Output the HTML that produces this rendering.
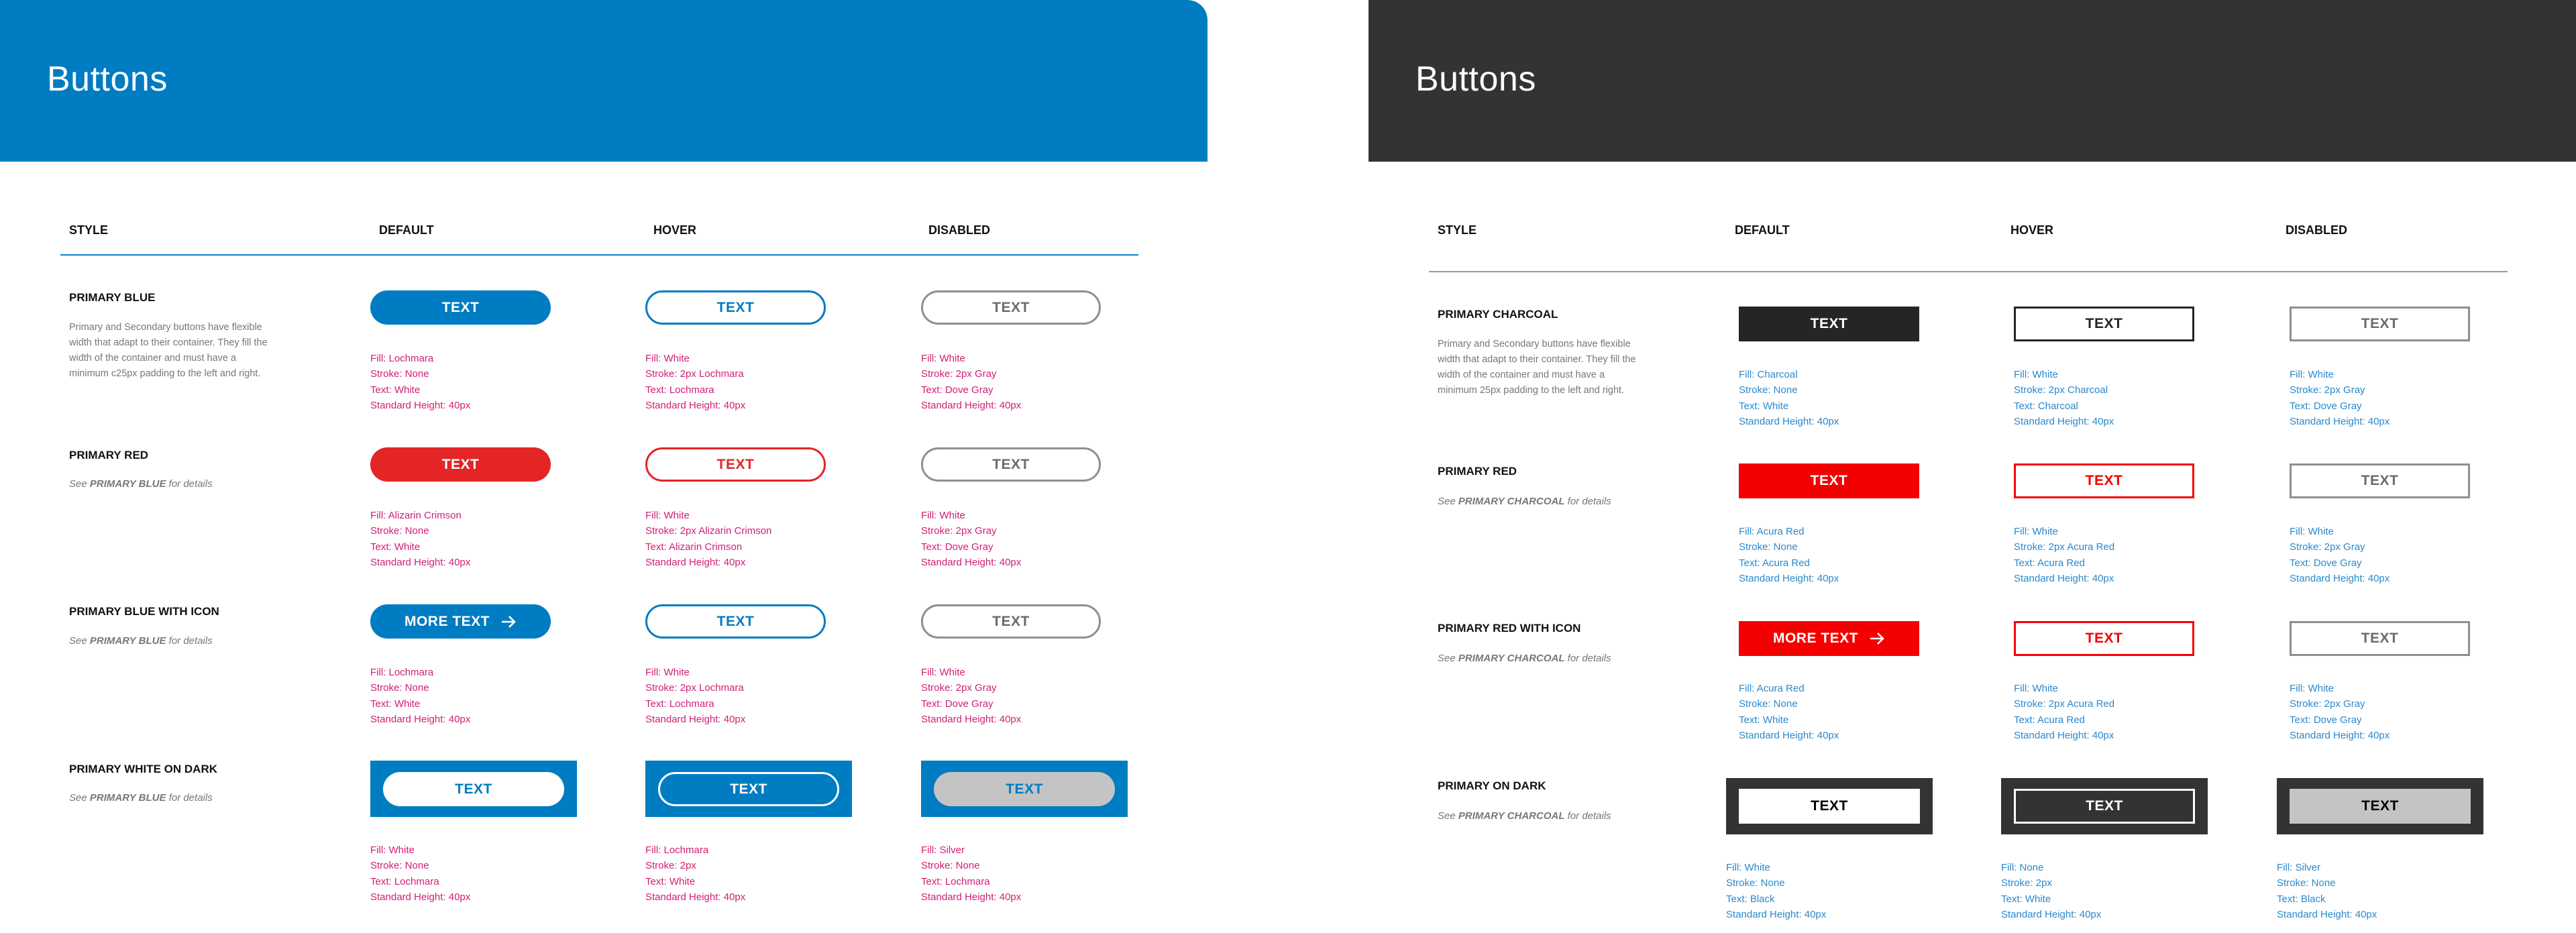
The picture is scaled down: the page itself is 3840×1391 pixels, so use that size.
<!DOCTYPE html>
<html><head><meta charset="utf-8"><style>
*{margin:0;padding:0;box-sizing:border-box}
body{width:3840px;height:1391px;background:#fff;position:relative;overflow:hidden;font-family:"Liberation Sans",sans-serif}
.a{position:absolute;white-space:nowrap}
.hdr{position:absolute;top:0;height:241px}
.title{position:absolute;left:70px;top:88px;font-size:52px;color:#fff;font-weight:300;letter-spacing:0.5px}
.col{font-size:18px;font-weight:bold;color:#111;line-height:24px}
.lbl{font-size:17px;font-weight:bold;color:#111;line-height:24px}
.desc{font-size:14.5px;color:#777;line-height:23px}
.see{font-size:15px;color:#777;font-style:italic;line-height:22px}
.see b{font-weight:bold}
.spec{font-size:15px;line-height:23.3px}
.pk{color:#d01e73}.bl{color:#2a88cc}
.btn{position:absolute;display:flex;align-items:center;justify-content:center;font-weight:bold;font-size:21px;letter-spacing:0.5px}
.pill{border-radius:26px}
</style></head><body>

<div class="hdr" style="left:0;width:1800px;background:#007CC2;border-radius:0 30px 0 0"><div class="title">Buttons</div></div>
<div class="hdr" style="left:2040px;width:1800px;background:#333"><div class="title">Buttons</div></div>

<!-- LEFT -->
<div class="a col" style="left:103px;top:331px">STYLE</div>
<div class="a col" style="left:565px;top:331px">DEFAULT</div>
<div class="a col" style="left:974px;top:331px">HOVER</div>
<div class="a col" style="left:1384px;top:331px">DISABLED</div>
<div class="a" style="left:90px;top:379px;width:1607px;height:2px;background:#0a7fc7"></div>

<div class="a lbl" style="left:103px;top:432px">PRIMARY BLUE</div>
<div class="a desc" style="left:103px;top:477px">Primary and Secondary buttons have flexible<br>width that adapt to their container. They fill the<br>width of the container and must have a<br>minimum c25px padding to the left and right.</div>
<div class="btn pill" style="left:552px;top:433px;width:269px;height:51px;background:#007CC2;color:#fff">TEXT</div>
<div class="btn pill" style="left:962px;top:433px;width:269px;height:51px;border:3px solid #007CC2;color:#007CC2">TEXT</div>
<div class="btn pill" style="left:1373px;top:433px;width:268px;height:51px;border:3px solid #8f8f8f;color:#6b6b6b">TEXT</div>
<div class="a spec pk" style="left:552px;top:523px">Fill: Lochmara<br>Stroke: None<br>Text: White<br>Standard Height: 40px</div>
<div class="a spec pk" style="left:962px;top:523px">Fill: White<br>Stroke: 2px Lochmara<br>Text: Lochmara<br>Standard Height: 40px</div>
<div class="a spec pk" style="left:1373px;top:523px">Fill: White<br>Stroke: 2px Gray<br>Text: Dove Gray<br>Standard Height: 40px</div>

<div class="a lbl" style="left:103px;top:667px">PRIMARY RED</div>
<div class="a see" style="left:103px;top:711px">See <b>PRIMARY BLUE</b> for details</div>
<div class="btn pill" style="left:552px;top:667px;width:269px;height:51px;background:#E32526;color:#fff">TEXT</div>
<div class="btn pill" style="left:962px;top:667px;width:269px;height:51px;border:3px solid #E32526;color:#E32526">TEXT</div>
<div class="btn pill" style="left:1373px;top:667px;width:268px;height:51px;border:3px solid #8f8f8f;color:#6b6b6b">TEXT</div>
<div class="a spec pk" style="left:552px;top:757px">Fill: Alizarin Crimson<br>Stroke: None<br>Text: White<br>Standard Height: 40px</div>
<div class="a spec pk" style="left:962px;top:757px">Fill: White<br>Stroke: 2px Alizarin Crimson<br>Text: Alizarin Crimson<br>Standard Height: 40px</div>
<div class="a spec pk" style="left:1373px;top:757px">Fill: White<br>Stroke: 2px Gray<br>Text: Dove Gray<br>Standard Height: 40px</div>

<div class="a lbl" style="left:103px;top:900px">PRIMARY BLUE WITH ICON</div>
<div class="a see" style="left:103px;top:945px">See <b>PRIMARY BLUE</b> for details</div>
<div class="btn pill" style="left:552px;top:901px;width:269px;height:51px;background:#007CC2;color:#fff">MORE TEXT<svg width="24" height="20" viewBox="0 0 24 20" style="margin-left:16px"><path d="M2 10H21M13 2L21 10L13 18" stroke="#fff" stroke-width="2.6" fill="none"/></svg></div>
<div class="btn pill" style="left:962px;top:901px;width:269px;height:51px;border:3px solid #007CC2;color:#007CC2">TEXT</div>
<div class="btn pill" style="left:1373px;top:901px;width:268px;height:51px;border:3px solid #8f8f8f;color:#6b6b6b">TEXT</div>
<div class="a spec pk" style="left:552px;top:991px">Fill: Lochmara<br>Stroke: None<br>Text: White<br>Standard Height: 40px</div>
<div class="a spec pk" style="left:962px;top:991px">Fill: White<br>Stroke: 2px Lochmara<br>Text: Lochmara<br>Standard Height: 40px</div>
<div class="a spec pk" style="left:1373px;top:991px">Fill: White<br>Stroke: 2px Gray<br>Text: Dove Gray<br>Standard Height: 40px</div>

<div class="a lbl" style="left:103px;top:1135px">PRIMARY WHITE ON DARK</div>
<div class="a see" style="left:103px;top:1179px">See <b>PRIMARY BLUE</b> for details</div>
<div class="a" style="left:552px;top:1134px;width:308px;height:84px;background:#007CC2"></div>
<div class="a" style="left:962px;top:1134px;width:308px;height:84px;background:#007CC2"></div>
<div class="a" style="left:1373px;top:1134px;width:308px;height:84px;background:#007CC2"></div>
<div class="btn pill" style="left:571px;top:1151px;width:270px;height:51px;background:#fff;color:#007CC2">TEXT</div>
<div class="btn pill" style="left:981px;top:1151px;width:270px;height:51px;border:3px solid #fff;color:#fff">TEXT</div>
<div class="btn pill" style="left:1392px;top:1151px;width:270px;height:51px;background:#c4c4c4;color:#007CC2">TEXT</div>
<div class="a spec pk" style="left:552px;top:1256px">Fill: White<br>Stroke: None<br>Text: Lochmara<br>Standard Height: 40px</div>
<div class="a spec pk" style="left:962px;top:1256px">Fill: Lochmara<br>Stroke: 2px<br>Text: White<br>Standard Height: 40px</div>
<div class="a spec pk" style="left:1373px;top:1256px">Fill: Silver<br>Stroke: None<br>Text: Lochmara<br>Standard Height: 40px</div>

<!-- RIGHT -->
<div class="a col" style="left:2143px;top:331px">STYLE</div>
<div class="a col" style="left:2586px;top:331px">DEFAULT</div>
<div class="a col" style="left:2997px;top:331px">HOVER</div>
<div class="a col" style="left:3407px;top:331px">DISABLED</div>
<div class="a" style="left:2130px;top:404px;width:1608px;height:2px;background:#999"></div>

<div class="a lbl" style="left:2143px;top:457px">PRIMARY CHARCOAL</div>
<div class="a desc" style="left:2143px;top:502px">Primary and Secondary buttons have flexible<br>width that adapt to their container. They fill the<br>width of the container and must have a<br>minimum 25px padding to the left and right.</div>
<div class="btn" style="left:2592px;top:457px;width:269px;height:52px;background:#252525;color:#fff">TEXT</div>
<div class="btn" style="left:3002px;top:457px;width:269px;height:52px;border:3px solid #252525;color:#252525">TEXT</div>
<div class="btn" style="left:3413px;top:457px;width:269px;height:52px;border:3px solid #8f8f8f;color:#6b6b6b">TEXT</div>
<div class="a spec bl" style="left:2592px;top:547px">Fill: Charcoal<br>Stroke: None<br>Text: White<br>Standard Height: 40px</div>
<div class="a spec bl" style="left:3002px;top:547px">Fill: White<br>Stroke: 2px Charcoal<br>Text: Charcoal<br>Standard Height: 40px</div>
<div class="a spec bl" style="left:3413px;top:547px">Fill: White<br>Stroke: 2px Gray<br>Text: Dove Gray<br>Standard Height: 40px</div>

<div class="a lbl" style="left:2143px;top:691px">PRIMARY RED</div>
<div class="a see" style="left:2143px;top:737px">See <b>PRIMARY CHARCOAL</b> for details</div>
<div class="btn" style="left:2592px;top:691px;width:269px;height:52px;background:#F50000;color:#fff">TEXT</div>
<div class="btn" style="left:3002px;top:691px;width:269px;height:52px;border:3px solid #F50000;color:#F50000">TEXT</div>
<div class="btn" style="left:3413px;top:691px;width:269px;height:52px;border:3px solid #8f8f8f;color:#6b6b6b">TEXT</div>
<div class="a spec bl" style="left:2592px;top:781px">Fill: Acura Red<br>Stroke: None<br>Text: Acura Red<br>Standard Height: 40px</div>
<div class="a spec bl" style="left:3002px;top:781px">Fill: White<br>Stroke: 2px Acura Red<br>Text: Acura Red<br>Standard Height: 40px</div>
<div class="a spec bl" style="left:3413px;top:781px">Fill: White<br>Stroke: 2px Gray<br>Text: Dove Gray<br>Standard Height: 40px</div>

<div class="a lbl" style="left:2143px;top:925px">PRIMARY RED WITH ICON</div>
<div class="a see" style="left:2143px;top:971px">See <b>PRIMARY CHARCOAL</b> for details</div>
<div class="btn" style="left:2592px;top:926px;width:269px;height:52px;background:#F50000;color:#fff">MORE TEXT<svg width="24" height="20" viewBox="0 0 24 20" style="margin-left:16px"><path d="M2 10H21M13 2L21 10L13 18" stroke="#fff" stroke-width="2.6" fill="none"/></svg></div>
<div class="btn" style="left:3002px;top:926px;width:269px;height:52px;border:3px solid #F50000;color:#F50000">TEXT</div>
<div class="btn" style="left:3413px;top:926px;width:269px;height:52px;border:3px solid #8f8f8f;color:#6b6b6b">TEXT</div>
<div class="a spec bl" style="left:2592px;top:1015px">Fill: Acura Red<br>Stroke: None<br>Text: White<br>Standard Height: 40px</div>
<div class="a spec bl" style="left:3002px;top:1015px">Fill: White<br>Stroke: 2px Acura Red<br>Text: Acura Red<br>Standard Height: 40px</div>
<div class="a spec bl" style="left:3413px;top:1015px">Fill: White<br>Stroke: 2px Gray<br>Text: Dove Gray<br>Standard Height: 40px</div>

<div class="a lbl" style="left:2143px;top:1160px">PRIMARY ON DARK</div>
<div class="a see" style="left:2143px;top:1206px">See <b>PRIMARY CHARCOAL</b> for details</div>
<div class="a" style="left:2573px;top:1160px;width:308px;height:84px;background:#333"></div>
<div class="a" style="left:2983px;top:1160px;width:308px;height:84px;background:#333"></div>
<div class="a" style="left:3394px;top:1160px;width:308px;height:84px;background:#333"></div>
<div class="btn" style="left:2592px;top:1176px;width:270px;height:52px;background:#fff;color:#000">TEXT</div>
<div class="btn" style="left:3002px;top:1176px;width:270px;height:52px;border:3px solid #fff;color:#fff">TEXT</div>
<div class="btn" style="left:3413px;top:1176px;width:270px;height:52px;background:#c4c4c4;color:#000">TEXT</div>
<div class="a spec bl" style="left:2573px;top:1282px">Fill: White<br>Stroke: None<br>Text: Black<br>Standard Height: 40px</div>
<div class="a spec bl" style="left:2983px;top:1282px">Fill: None<br>Stroke: 2px<br>Text: White<br>Standard Height: 40px</div>
<div class="a spec bl" style="left:3394px;top:1282px">Fill: Silver<br>Stroke: None<br>Text: Black<br>Standard Height: 40px</div>

</body></html>
